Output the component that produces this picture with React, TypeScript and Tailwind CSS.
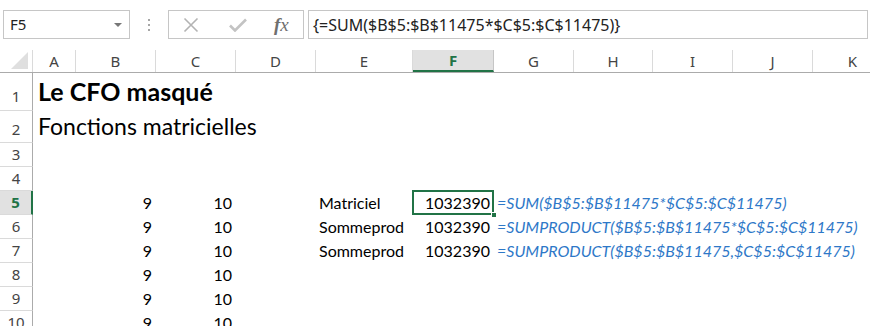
import React from "react";

const COLS = [
  { key: "A", w: 43 },
  { key: "B", w: 80 },
  { key: "C", w: 80 },
  { key: "D", w: 80 },
  { key: "E", w: 97 },
  { key: "F", w: 81 },
  { key: "G", w: 80 },
  { key: "H", w: 79 },
  { key: "I", w: 80 },
  { key: "J", w: 80 },
  { key: "K", w: 80 },
];

type Cell = { text: string; kind?: "num" | "label" | "formula" };

const ROWS: { n: number; h: number; cells: Record<string, Cell> }[] = [
  { n: 1, h: 38, cells: {} },
  { n: 2, h: 32, cells: {} },
  { n: 3, h: 24, cells: {} },
  { n: 4, h: 24, cells: {} },
  {
    n: 5,
    h: 24,
    cells: {
      B: { text: "9", kind: "num" },
      C: { text: "10", kind: "num" },
      E: { text: "Matriciel", kind: "label" },
      F: { text: "1032390", kind: "num" },
      G: { text: "=SUM($B$5:$B$11475*$C$5:$C$11475)", kind: "formula" },
    },
  },
  {
    n: 6,
    h: 24,
    cells: {
      B: { text: "9", kind: "num" },
      C: { text: "10", kind: "num" },
      E: { text: "Sommeprod", kind: "label" },
      F: { text: "1032390", kind: "num" },
      G: { text: "=SUMPRODUCT($B$5:$B$11475*$C$5:$C$11475)", kind: "formula" },
    },
  },
  {
    n: 7,
    h: 24,
    cells: {
      B: { text: "9", kind: "num" },
      C: { text: "10", kind: "num" },
      E: { text: "Sommeprod", kind: "label" },
      F: { text: "1032390", kind: "num" },
      G: { text: "=SUMPRODUCT($B$5:$B$11475,$C$5:$C$11475)", kind: "formula" },
    },
  },
  { n: 8, h: 24, cells: { B: { text: "9", kind: "num" }, C: { text: "10", kind: "num" } } },
  { n: 9, h: 24, cells: { B: { text: "9", kind: "num" }, C: { text: "10", kind: "num" } } },
  { n: 10, h: 24, cells: { B: { text: "9", kind: "num" }, C: { text: "10", kind: "num" } } },
];

const UI_FONT = "font-['Noto_Sans',sans-serif]";
const CELL_FONT = "font-['Lato',sans-serif]";

function FormulaBar() {
  return (
    <div className={`flex h-[50px] items-start pt-[10px] pl-[3px] ${UI_FONT}`}>
      {/* name box */}
      <div className="flex h-[29px] w-[127px] items-center justify-between border border-[#c6c6c6] pl-[6px] pr-[7px]">
        <span className="text-[15px] text-[#222]">F5</span>
        <span className="h-0 w-0 border-x-[4px] border-t-[4px] border-x-transparent border-t-[#777]" />
      </div>
      {/* grip dots */}
      <div className="flex w-[38px] flex-col items-center gap-[3px] pt-[9px]">
        <span className="h-[2px] w-[2px] bg-[#a6a6a6]" />
        <span className="h-[2px] w-[2px] bg-[#a6a6a6]" />
        <span className="h-[2px] w-[2px] bg-[#a6a6a6]" />
      </div>
      {/* cancel / enter / fx */}
      <div className="flex h-[29px] w-[136px] items-center border border-[#c6c6c6] pl-[14px]">
        <svg width="16" height="16" viewBox="0 0 16 16" className="mr-[30px]">
          <path d="M1.5 1.5 L14.5 14.5 M14.5 1.5 L1.5 14.5" stroke="#b3b3b3" strokeWidth="1.6" fill="none" />
        </svg>
        <svg width="18" height="14" viewBox="0 0 18 14" className="mr-[27px]">
          <path d="M1 7.5 L6 12.5 L17 1.5" stroke="#c3c3c3" strokeWidth="2.6" fill="none" />
        </svg>
        <span className="font-['Liberation_Serif',serif] text-[19px] italic leading-none text-[#6f6f6f]">
          <span className="font-bold">f</span>x
        </span>
      </div>
      {/* formula */}
      <div className="ml-[4px] flex h-[29px] w-[560px] items-center border border-[#c6c6c6] pl-[4px]">
        <span className="text-[16px] text-[#222] whitespace-nowrap">{"{=SUM($B$5:$B$11475*$C$5:$C$11475)}"}</span>
      </div>
    </div>
  );
}

function ColumnHeaders() {
  return (
    <div className={`flex h-[23px] border-b border-[#ababab] ${UI_FONT}`}>
      <div className="relative w-[33px] shrink-0 border-r border-[#dadada]">
        <svg width="18" height="18" viewBox="0 0 18 18" className="absolute right-[3px] bottom-[2px]">
          <polygon points="17,0 17,17 0,17" fill="#dfdfdf" />
        </svg>
      </div>
      {COLS.map((c) => {
        const sel = c.key === "F";
        return (
          <div
            key={c.key}
            style={{ width: c.w }}
            className={`flex shrink-0 items-center justify-center text-[15px] ${
              sel
                ? "border-b-2 border-b-[#217346] bg-[#e1e1e1] font-bold text-[#217346] border-r border-r-[#c6c6c6]"
                : "border-r border-[#dadada] text-[#444]"
            }`}
          >
            {c.key}
          </div>
        );
      })}
    </div>
  );
}

function CellContent({ cell }: { cell: Cell }) {
  if (cell.kind === "num") {
    return <div className="w-full pr-[4px] text-right text-[16px] leading-[24px] text-black">{cell.text}</div>;
  }
  if (cell.kind === "formula") {
    return (
      <div className="whitespace-nowrap pl-[3px] text-[16px] italic leading-[24px] text-[#2e78c8]">{cell.text}</div>
    );
  }
  return <div className="whitespace-nowrap pl-[3px] text-[16px] leading-[24px] text-black">{cell.text}</div>;
}

function SheetRow({ row }: { row: (typeof ROWS)[number] }) {
  const sel = row.n === 5;
  const headerPad = row.n === 1 ? "pb-[4px]" : row.n === 2 ? "pb-[3px]" : "pb-[2px]";
  return (
    <div className="flex" style={{ height: row.h }}>
      <div
        className={`flex w-[33px] shrink-0 items-end justify-center border-b border-[#dadada] ${headerPad} ${UI_FONT} text-[15px] leading-[20px] ${
          sel ? "border-r-2 border-r-[#217346] bg-[#e1e1e1] font-bold text-[#217346]" : "border-r border-r-[#ababab] text-[#444]"
        }`}
      >
        {row.n}
      </div>
      {row.n === 1 && (
        <div className={`whitespace-nowrap pl-[5px] text-[25px] font-bold leading-[37px] text-black ${CELL_FONT}`}>
          Le CFO masqué
        </div>
      )}
      {row.n === 2 && (
        <div className={`whitespace-nowrap pl-[5px] text-[23px] leading-[31px] text-black ${CELL_FONT}`}>
          Fonctions matricielles
        </div>
      )}
      {row.n > 2 &&
        COLS.map((c) => {
          const cell = row.cells[c.key];
          const active = sel && c.key === "F";
          return (
            <div key={c.key} style={{ width: c.w }} className={`relative flex shrink-0 ${CELL_FONT}`}>
              {cell && <CellContent cell={cell} />}
              {active && (
                <>
                  <div className="pointer-events-none absolute -left-[1px] -top-[1px] h-[25px] w-[82px] border-2 border-[#217346]" />
                  <div className="absolute -right-[3px] -bottom-[3px] h-[6px] w-[6px] border border-white bg-[#217346]" />
                </>
              )}
            </div>
          );
        })}
    </div>
  );
}

export default function App() {
  return (
    <div className="h-[326px] w-[870px] overflow-hidden bg-white">
      <FormulaBar />
      <ColumnHeaders />
      {ROWS.map((r) => (
        <SheetRow key={r.n} row={r} />
      ))}
    </div>
  );
}
